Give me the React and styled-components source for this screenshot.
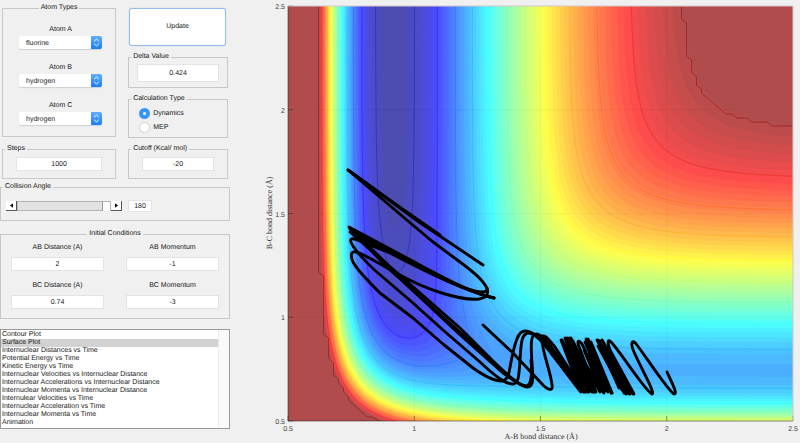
import React, { useMemo, useState } from "react";
import styled, { createGlobalStyle } from "styled-components";

const ATOMS = ["fluorine", "hydrogen", "chlorine"];

const PLOTS = [
  "Contour Plot",
  "Surface Plot",
  "Internuclear Distances vs Time",
  "Potential Energy vs Time",
  "Kinetic Energy vs Time",
  "Internuclear Velocities vs Internuclear Distance",
  "Internuclear Accelerations vs Internuclear Distance",
  "Internuclear Momenta vs Internuclear Distance",
  "Internulear Velocities vs Time",
  "Internuclear Acceleration vs Time",
  "Internuclear Momenta vs Time",
  "Animation",
];

/* London-Eyring-Polanyi-Sato surface, energies in kcal/mol */
const SATO = 0.19;
const HF = { d: 141.2, beta: 2.2187, r0: 0.917 };
const HH = { d: 109.45, beta: 1.942, r0: 0.7419 };

function pairTerms({ d, beta, r0 }, r) {
  const e = Math.exp(-beta * (r - r0));
  return {
    q: (d / 4) * ((3 + SATO) * e * e - (2 + 6 * SATO) * e),
    j: (d / 4) * ((1 + 3 * SATO) * e * e - (6 + 2 * SATO) * e),
  };
}

function energy(ab, bc) {
  const a = pairTerms(HF, ab);
  const b = pairTerms(HH, bc);
  const c = pairTerms(HF, ab + bc);
  const mix = Math.sqrt(0.5 * ((a.j - b.j) ** 2 + (b.j - c.j) ** 2 + (a.j - c.j) ** 2));
  return (a.q + b.q + c.q - mix) / (1 + SATO);
}

const BOX = { x: 48, y: 6, w: 505, h: 415 };
const COLS = 101;
const ROWS = 83;
const V_MIN = -141.2;
const CUTOFF = -20;
const BANDS = 64;

const px = (r) => BOX.x + ((r - 0.5) / 2) * BOX.w;
const py = (r) => BOX.y + BOX.h - ((r - 0.5) / 2) * BOX.h;

function jet(t, floor = 76) {
  const channel = (centre) => Math.max(0, Math.min(1, 1.5 - Math.abs(4 * t - centre)));
  const soften = (v) => Math.round(floor + (255 - floor) * v);
  return `rgb(${soften(channel(3))}, ${soften(channel(2))}, ${soften(channel(1))})`;
}

const bandColour = (n) => jet((n + 1) / (BANDS + 1));

function buildGrid() {
  const grid = [];
  for (let i = 0; i <= ROWS; i++) {
    const row = [];
    for (let k = 0; k <= COLS; k++) {
      row.push(energy(0.5 + (2 * k) / COLS, 2.5 - (2 * i) / ROWS));
    }
    grid.push(row);
  }
  return grid;
}

/* Outline of the cells at or above a level; "line" holds only the isoline */
function trace(grid, level) {
  const dx = BOX.w / COLS;
  const dy = BOX.h / ROWS;
  let area = "";
  let line = "";
  const rect = (from, to, i) => {
    const x0 = BOX.x + from * dx;
    const x1 = BOX.x + to * dx;
    const y0 = BOX.y + i * dy;
    const y1 = BOX.y + (i + 1) * dy;
    area += `M${x0} ${y0}H${x1}V${y1}H${x0}Z`;
  };

  for (let i = 0; i < ROWS; i++) {
    let start = -1;
    for (let k = 0; k < COLS; k++) {
      const corners = [
        [k, i, grid[i][k]],
        [k + 1, i, grid[i][k + 1]],
        [k + 1, i + 1, grid[i + 1][k + 1]],
        [k, i + 1, grid[i + 1][k]],
      ];
      const above = corners.filter((c) => c[2] >= level).length;
      if (above === 4) {
        if (start < 0) start = k;
        continue;
      }
      if (start >= 0) {
        rect(start, k, i);
        start = -1;
      }
      if (above === 0) continue;

      const shape = [];
      const cuts = [];
      corners.forEach((a, n) => {
        const b = corners[(n + 1) % 4];
        const point = (cx, cy) => `${(BOX.x + cx * dx).toFixed(2)} ${(BOX.y + cy * dy).toFixed(2)}`;
        if (a[2] >= level) shape.push(point(a[0], a[1]));
        if (a[2] >= level !== b[2] >= level) {
          const t = (level - a[2]) / (b[2] - a[2]);
          const cut = point(a[0] + t * (b[0] - a[0]), a[1] + t * (b[1] - a[1]));
          shape.push(cut);
          cuts.push(cut);
        }
      });
      area += `M${shape.join("L")}Z`;
      if (cuts.length === 2) line += `M${cuts.join("L")}`;
    }
    if (start >= 0) rect(start, COLS, i);
  }
  return { area, line };
}

function buildSurface() {
  const grid = buildGrid();
  const bands = [];
  for (let n = 1; n < BANDS; n++) {
    const level = V_MIN + ((CUTOFF - V_MIN) * n) / BANDS;
    bands.push({ fill: bandColour(n), d: trace(grid, level).area });
  }
  const lines = [];
  for (let n = 0; n < 11; n++) {
    const level = -137 + 10.4 * n;
    const t = (level - V_MIN) / (CUTOFF - V_MIN);
    lines.push({ stroke: jet(t, 20), d: trace(grid, level).line });
  }
  return { bands, lines };
}

/* Drawn in window coordinates, shifted into the plot below */
const TRAJECTORY = [
  "M483 265L419 222L348 170L408 221L433 242L460 262C472 271 479 277 482 281C490 290 490 297 479 299C460 301 425 289 400 275C380 264 362 253 356 252C351 251 350 255 353 262C357 270 370 283 380 293L413 318L443 344L473 368C487 378 496 381 502 381C508 380 509 374 511 362C515 342 518 331 525 331C534 331 541 341 549 350L581 389",
  "M494 298C470 293 430 274 390 253L357 240C350 237 349 240 353 246C358 254 372 268 378 273L413 303L443 330L480 362C495 376 505 384 513 384C518 384 519 378 520 360C521 345 521 333 529 333C534 333 540 339 546 345L583 391",
  "M494 298C484 296 465 289 433 272L349 227L387 264L460 328L493 361C508 375 520 387 528 387C534 387 533 376 532 363C531 348 530 334 536 334C542 334 549 344 555 352L586 392",
  "M487 288C488 293 480 293 471 290C452 285 420 267 400 257L350 229L389 269L462 334L497 367C510 379 520 386 527 386C532 384 532 370 531 360",
  "M494 298C470 292 445 280 420 267C395 254 370 243 350 232L373 252L407 285L458 333L503 373L517 382",
  "M348 170L398 206L440 235",
  "M483 325L513 353L543 385C549 391 553 391 552 385C551 372 541 349 542 338C543 332 549 340 555 347L584 392",
  "M667 372C672 383 678 394 674 394C669 392 646 357 637 345C632 338 630 343 634 352C640 366 656 394 652 394C646 392 621 353 612 343C607 337 607 343 611 352L634 394L602 340L629 394L598 340L633 394L604 345L626 394L597 340L630 394L608 347",
  "M612 393L588 339L608 392L586 339L604 393C598 381 588 355 582 344C577 338 577 343 580 349L596 392L571 338L594 392L567 338L589 392L562 340L582 391L542 336L580 391L538 336",
  "M581 392L561 340L592 392L569 338L595 392L573 341L588 392L565 338L584 392",
  "M588 340L611 393M591 342L612 393M585 342L606 391M575 348L591 391M600 341L624 393M598 346L622 390M574 344L600 392M578 352L603 392",
  "M571 346L587 388M567 344L584 386M584 350L599 386M594 354L608 386M603 352L619 388M606 358L623 390M589 354L604 386M574 354L590 386",
];

/* The cutoff edge follows the coarse sampling of the surface */
const CUTOFF_EDGES = [
  "M78.500 6V272L83.500 276V334L88.500 338V358L93.500 363V375L98.500 379V383L103.500 388V392L108.500 397V400L127 417H132L139 421",
  "M441.500 6V19L446.500 23V56L451.500 60V72L456.500 77V85L461.500 89V93L486 114H492L497 118H507L512 122H527L532 126H553",
];

function EnergyPlot() {
  const surface = useMemo(buildSurface, []);
  const ticks = [0.5, 1, 1.5, 2, 2.5];

  return (
    <Plot viewBox="0 0 560 443" role="img" aria-label="Potential energy surface">
      <rect x={BOX.x} y={BOX.y} width={BOX.w} height={BOX.h} fill={bandColour(0)} />
      {surface.bands.map((band, i) => (
        <path key={i} d={band.d} fill={band.fill} />
      ))}
      {surface.lines.map((line, i) => (
        <path key={i} d={line.d} fill="none" stroke={line.stroke} strokeOpacity="0.4" />
      ))}
      {CUTOFF_EDGES.map((d) => (
        <path key={d} d={d} fill="none" stroke="#8f2424" strokeOpacity="0.75" />
      ))}
      {ticks.map((t) => (
        <g key={t}>
          <path d={`M${px(t)} 6V421M48 ${py(t)}H553`} stroke="#262626" strokeOpacity="0.04" />
          <path d={`M${px(t)} 421v-5M48 ${py(t)}h5`} stroke="#262626" strokeOpacity="0.45" />
          <TickLabel x={px(t)} y="431" textAnchor="middle">{t}</TickLabel>
          <TickLabel x="45" y={py(t) + 3} textAnchor="end">{t}</TickLabel>
        </g>
      ))}
      <path d="M48 6V421H553" fill="none" stroke="#262626" strokeOpacity="0.5" />
      <path d="M48 6H553V421" fill="none" stroke="#d8cccc" />
      <g transform="translate(-240 0)">
        {TRAJECTORY.map((d) => (
          <path key={d} d={d} fill="none" stroke="#000" strokeWidth="2.9" strokeLinecap="round" strokeLinejoin="round" />
        ))}
      </g>
      <AxisTitle x="301" y="439" textAnchor="middle">A-B bond distance (Å)</AxisTitle>
      <AxisTitle transform="translate(32 213) rotate(-90)" textAnchor="middle">B-C bond distance (Å)</AxisTitle>
    </Plot>
  );
}

function AtomSelect({ id, label, initial }) {
  return (
    <AtomField>
      <label htmlFor={id}>{label}</label>
      <SelectBox>
        <select id={id} defaultValue={initial}>
          {ATOMS.map((atom) => (
            <option key={atom}>{atom}</option>
          ))}
        </select>
        <svg viewBox="0 0 11 13" aria-hidden="true">
          <path d="M3.200 5.200L5.500 3L7.800 5.200M3.200 7.800L5.500 10L7.800 7.800" />
        </svg>
      </SelectBox>
    </AtomField>
  );
}

function NumberField({ id, label, initial }) {
  return (
    <LabelledField>
      <label htmlFor={id}>{label}</label>
      <TextInput id={id} defaultValue={initial} />
    </LabelledField>
  );
}

function App() {
  const [angle, setAngle] = useState(180);
  const step = (by) => setAngle(Math.max(0, Math.min(180, Number(angle) + by)));

  return (
    <>
      <GlobalStyle />
      <Page>
        <Sidebar>
          <TopGrid>
            <Column>
              <Group $center>
                <legend>Atom Types</legend>
                <AtomList>
                  <AtomSelect id="atom-a" label="Atom A" initial="fluorine" />
                  <AtomSelect id="atom-b" label="Atom B" initial="hydrogen" />
                  <AtomSelect id="atom-c" label="Atom C" initial="hydrogen" />
                </AtomList>
              </Group>
              <Group>
                <legend>Steps</legend>
                <Inset>
                  <TextInput defaultValue="1000" aria-label="Steps" />
                </Inset>
              </Group>
            </Column>
            <Column>
              <UpdateButton type="button">Update</UpdateButton>
              <Group>
                <legend>Delta Value</legend>
                <Inset $narrow>
                  <TextInput $tall defaultValue="0.424" aria-label="Delta Value" />
                </Inset>
              </Group>
              <Group>
                <legend>Calculation Type</legend>
                <Radios>
                  <label><input type="radio" name="calc" defaultChecked />Dynamics</label>
                  <label><input type="radio" name="calc" />MEP</label>
                </Radios>
              </Group>
              <Group>
                <legend>Cutoff (Kcal/ mol)</legend>
                <Inset>
                  <TextInput defaultValue="-20" aria-label="Cutoff (Kcal/ mol)" />
                </Inset>
              </Group>
            </Column>
          </TopGrid>

          <Group>
            <legend>Collision Angle</legend>
            <AngleRow>
              <Slider>
                <button type="button" aria-label="Decrease angle" onClick={() => step(-1)}>
                  <svg viewBox="0 0 4 6"><path d="M4 0V6L0 3Z" /></svg>
                </button>
                <input
                  type="range"
                  min="0"
                  max="180"
                  value={angle}
                  aria-label="Collision Angle"
                  onChange={(e) => setAngle(e.target.value)}
                />
                <button type="button" aria-label="Increase angle" onClick={() => step(1)}>
                  <svg viewBox="0 0 4 6"><path d="M0 0V6L4 3Z" /></svg>
                </button>
              </Slider>
              <AngleInput value={angle} aria-label="Angle value" onChange={(e) => setAngle(e.target.value)} />
            </AngleRow>
          </Group>

          <Group $center $spaced>
            <legend>Initial Conditions</legend>
            <Conditions>
              <NumberField id="ab-dist" label="AB Distance (A)" initial="2" />
              <NumberField id="ab-mom" label="AB Momentum" initial="-1" />
              <NumberField id="bc-dist" label="BC Distance (A)" initial="0.74" />
              <NumberField id="bc-mom" label="BC Momentum" initial="-3" />
            </Conditions>
          </Group>

          <PlotList size={12} defaultValue="Surface Plot" aria-label="Plot type">
            {PLOTS.map((plot) => (
              <option key={plot}>{plot}</option>
            ))}
          </PlotList>
        </Sidebar>
        <EnergyPlot />
      </Page>
    </>
  );
}

export default App;

const GlobalStyle = createGlobalStyle`
  * {
    box-sizing: border-box;
  }

  body {
    margin: 0;
    background: #f0f0f0;
    color: #161616;
    font: 7px/8px "Liberation Sans", Arial, sans-serif;
    text-rendering: geometricPrecision;
  }

  input, select, button {
    margin: 0;
    font: inherit;
    color: inherit;
    text-rendering: inherit;
  }
`;

const Page = styled.div`
  display: grid;
  grid-template-columns: minmax(0, 3fr) minmax(0, 7fr);
  align-items: start;
`;

const Sidebar = styled.div`
  display: flex;
  flex-direction: column;
  padding: 4px 10px 0 0;
`;

const TopGrid = styled.div`
  display: grid;
  grid-template-columns: minmax(0, 8fr) minmax(0, 7fr);
  gap: 12px;
  padding: 0 2px;
  margin-bottom: 4px;
`;

const Column = styled.div`
  display: flex;
  flex-direction: column;
  justify-content: space-between;
  gap: 7px;
`;

const Group = styled.fieldset`
  min-width: 0;
  margin: ${(p) => (p.$spaced ? "9px 0 10px" : "0")};
  padding: 0;
  border: 1px solid #c8c8c8;

  legend {
    margin: ${(p) => (p.$center ? "0 auto" : "0 0 0 2px")};
    padding: 0 2px;
  }
`;

const AtomList = styled.div`
  display: flex;
  flex-direction: column;
  gap: 15px;
  padding: 14px 13px 11px 16px;
`;

const AtomField = styled.div`
  display: flex;
  flex-direction: column;
  gap: 2px;
  text-align: center;
`;

const SelectBox = styled.div`
  display: flex;
  height: 13px;
  border-radius: 2px;
  overflow: hidden;
  background: #fff;
  box-shadow: 0 1px 1px #cfcfcf;

  select {
    flex: 1;
    min-width: 0;
    padding: 2px 7px 0;
    border: 0;
    background: transparent;
    appearance: none;
  }

  svg {
    width: 11px;
    height: 13px;
    background: linear-gradient(#62aefb, #1a7df8);
    fill: none;
    stroke: #fff;
  }
`;

const Inset = styled.div`
  padding: ${(p) => (p.$narrow ? "3px 8px 5px" : "4px 13px 7px")};
`;

const TextInput = styled.input`
  display: block;
  width: 100%;
  height: ${(p) => (p.$tall ? "18px" : "14px")};
  padding: 0;
  border: 1px solid #e4e4e4;
  background: #fff;
  text-align: center;
`;

const UpdateButton = styled.button`
  height: 38px;
  margin: 4px 2px 0 1px;
  border: 1px solid #92bff0;
  border-radius: 3px;
  background: #fff;
  box-shadow: 0 0 1px #92bff0;
`;

const Radios = styled.div`
  display: flex;
  flex-direction: column;
  gap: 3px;
  padding: 5px 10px 4px;

  label {
    display: flex;
    align-items: center;
    gap: 3px;
  }

  input {
    appearance: none;
    width: 11px;
    height: 11px;
    border: 1px solid #d0d0d0;
    border-radius: 50%;
    background: #fff;
  }

  input:checked {
    border: 4px solid #3595f8;
  }
`;

const AngleRow = styled.div`
  display: flex;
  align-items: center;
  gap: 6px;
  padding: 9px 77px 8px 5px;
`;

const Slider = styled.div`
  display: flex;
  flex: 1;
  min-width: 0;
  height: 10px;

  button {
    display: flex;
    align-items: center;
    justify-content: center;
    width: 11px;
    padding: 0;
    border: 0;
    border-right: 1px solid #555;
    border-bottom: 1px solid #555;
    background: #fff;
  }

  svg {
    width: 3px;
    height: 5px;
  }

  input {
    flex: 1;
    min-width: 0;
    height: 10px;
    appearance: none;
    border: 1px solid #b4b4b4;
    background: #e2e2e2;
  }

  input::-webkit-slider-thumb {
    appearance: none;
    width: 8px;
    height: 9px;
    border-left: 1px solid #999;
    background: #fff;
  }
`;

const AngleInput = styled(TextInput)`
  flex: none;
  width: 24px;
  height: 12px;
`;

const Conditions = styled.div`
  display: grid;
  grid-template-columns: 1fr 1fr;
  gap: 11px 22px;
  padding: 6px 10px 9px;
`;

const LabelledField = styled.div`
  display: flex;
  flex-direction: column;
  gap: 5px;
  text-align: center;
`;

const PlotList = styled.select`
  height: 100px;
  padding: 1px 0 0;
  border: 1px solid #9a9a9a;
  border-radius: 0;
  background: linear-gradient(to left, #fafafa 10px, #e8e8e8 10px, #e8e8e8 11px, #fff 11px);
  overflow: hidden;

  option {
    min-height: 8px;
    margin-right: 11px;
    padding: 0 1px;
    line-height: 8px;
  }

  option:checked {
    background: #d2d2d2 linear-gradient(#d2d2d2, #d2d2d2);
    color: #161616;
  }
`;

const Plot = styled.svg`
  display: block;
  width: 100%;
`;

const TickLabel = styled.text`
  font: 7px "Liberation Sans", Arial, sans-serif;
  fill: #444;
`;

const AxisTitle = styled.text`
  font: 8px "Liberation Serif", "Times New Roman", serif;
  fill: #333;
`;
